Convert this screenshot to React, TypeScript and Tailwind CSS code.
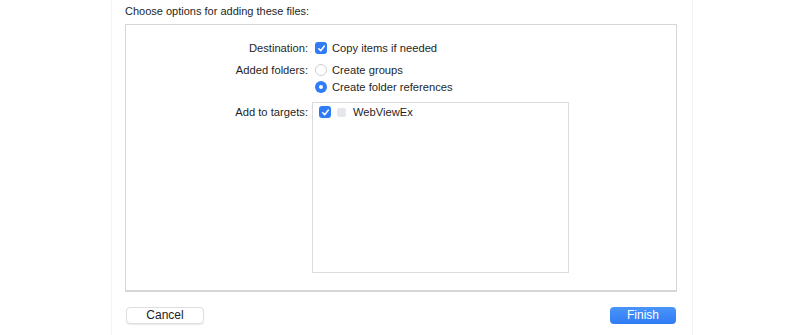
import React from "react";

const font = { fontFamily: '"Liberation Sans", Arial, sans-serif' };

function Check() {
  return (
    <span className="flex h-[12px] w-[12px] items-center justify-center rounded-[3px] bg-[#2f7cf6]">
      <svg width="9" height="9" viewBox="0 0 10 10" fill="none">
        <path d="M2 5.3 L4.1 7.5 L8.2 2.3" stroke="white" strokeWidth="1.7" strokeLinecap="round" strokeLinejoin="round" />
      </svg>
    </span>
  );
}

function Radio({ on }: { on?: boolean }) {
  return on ? (
    <span className="flex h-[12px] w-[12px] items-center justify-center rounded-full bg-[#2f7cf6]">
      <span className="h-[4px] w-[4px] rounded-full bg-white" />
    </span>
  ) : (
    <span className="h-[12px] w-[12px] rounded-full border border-[#cfcfcf] bg-white" />
  );
}

export default function App() {
  return (
    <div className="h-[335px] w-[800px] overflow-hidden bg-white text-[11.2px] text-[#1f1f1f]" style={font}>
      <div className="ml-[111px] h-full w-[582px] border-x border-[#f4f4f4] pl-[13px]">
        <div className="w-[552px]">
          <div className="pt-[4px] text-[11px] leading-[14px]">Choose options for adding these files:</div>

          <div className="mt-[6px] h-[268px] border border-b-2 border-[#d6d6d6] bg-white">
            <div className="grid grid-cols-[182px_1fr] gap-x-[7px] pt-[16px] leading-[14px]">
              <div className="text-right">Destination:</div>
              <div className="flex items-center gap-[5px]">
                <Check />
                <span>Copy items if needed</span>
              </div>

              <div className="mt-[8px] text-right">Added folders:</div>
              <div className="mt-[8px] flex flex-col gap-[3px]">
                <div className="flex items-center gap-[5px]">
                  <Radio />
                  <span>Create groups</span>
                </div>
                <div className="flex items-center gap-[5px]">
                  <Radio on />
                  <span>Create folder references</span>
                </div>
              </div>

              <div className="mt-[11px] text-right">Add to targets:</div>
              <div className="mt-[8px] -ml-[3px] h-[171px] w-[257px] border border-[#dcdcdc] bg-white">
                <div className="flex items-center pl-[6px] pt-[2px]">
                  <Check />
                  <span className="ml-[6px] h-[9px] w-[9px] rounded-[2px] bg-[#e4e7ec]" />
                  <span className="ml-[7px]">WebViewEx</span>
                </div>
              </div>
            </div>
          </div>

          <div className="mt-[15px] flex items-center justify-between">
            <button className="ml-[1px] h-[17px] w-[78px] rounded-[4px] border border-[#dedede] bg-white text-[12px] leading-[15px] text-[#222] shadow-[0_1px_1px_rgba(0,0,0,0.08)]">
              Cancel
            </button>
            <button className="mr-[1px] h-[17px] w-[66px] rounded-[4px] bg-gradient-to-b from-[#4a94f8] to-[#2f7cf6] text-[12px] leading-[17px] text-white">
              Finish
            </button>
          </div>
        </div>
      </div>
    </div>
  );
}
